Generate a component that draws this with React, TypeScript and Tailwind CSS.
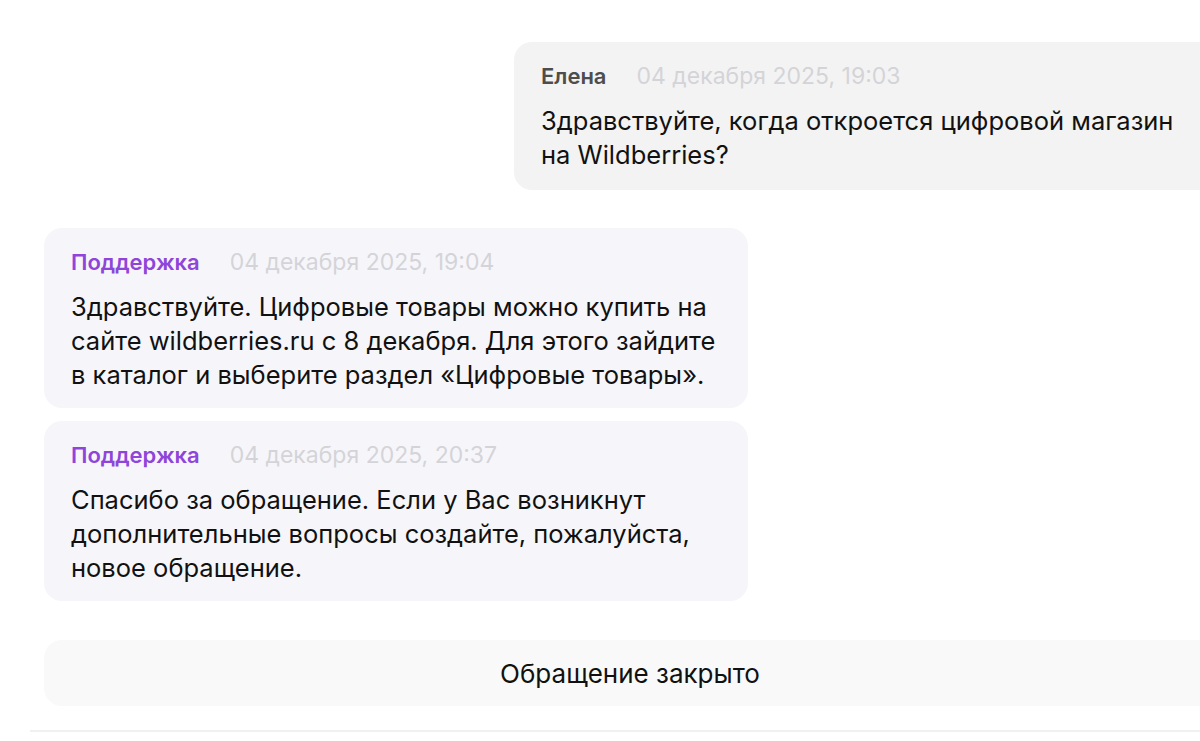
import React from "react";

const font = { fontFamily: "Inter, 'Noto Sans', sans-serif" };

function Header({ name, date, support }: { name: string; date: string; support?: boolean }) {
  return (
    <div className="flex items-center h-[28px] gap-[30px]">
      <span className={support ? "text-[22px] font-semibold text-[#8f45d9]" : "text-[22px] font-semibold text-[#4d4d4d]"}>{name}</span>
      <span className="text-[23px] text-[#d4d4d8]">{date}</span>
    </div>
  );
}

export default function App() {
  return (
    <div className="w-[1200px] h-[741px] overflow-hidden bg-white text-[#111]" style={font}>
      <div className="w-[1240px] pl-[44px] pt-[42px] flex flex-col">
        <div className="self-end w-[726px] rounded-[18px] bg-[#f3f3f3] pl-[27px] pt-[20px] pb-[18px]">
          <Header name="Елена" date="04 декабря 2025, 19:03" />
          <div className="mt-[14px] text-[25.5px] leading-[34px] whitespace-nowrap">
            Здравствуйте, когда откроется цифровой магазин
            <br />
            на Wildberries?
          </div>
        </div>

        <div className="mt-[38px] w-[704px] rounded-[18px] bg-[#f6f6fa] pl-[27px] pt-[20px] pb-[16px]">
          <Header name="Поддержка" date="04 декабря 2025, 19:04" support />
          <div className="mt-[14px] text-[25.5px] leading-[34px] whitespace-nowrap">
            Здравствуйте. Цифровые товары можно купить на
            <br />
            сайте wildberries.ru с 8 декабря. Для этого зайдите
            <br />
            в каталог и выберите раздел «Цифровые товары».
          </div>
        </div>

        <div className="mt-[13px] w-[704px] rounded-[18px] bg-[#f6f6fa] pl-[27px] pt-[20px] pb-[16px]">
          <Header name="Поддержка" date="04 декабря 2025, 20:37" support />
          <div className="mt-[14px] text-[25.5px] leading-[34px] whitespace-nowrap">
            Спасибо за обращение. Если у Вас возникнут
            <br />
            дополнительные вопросы создайте, пожалуйста,
            <br />
            новое обращение.
          </div>
        </div>

        <div className="mt-[39px] h-[66px] rounded-[18px] bg-[#f9f9f9] flex items-center justify-center pr-[24px] text-[26px]">
          Обращение закрыто
        </div>
      </div>
      <div className="mt-[24px] ml-[30px] h-[2px] bg-[#f0f0f0]" />
    </div>
  );
}
